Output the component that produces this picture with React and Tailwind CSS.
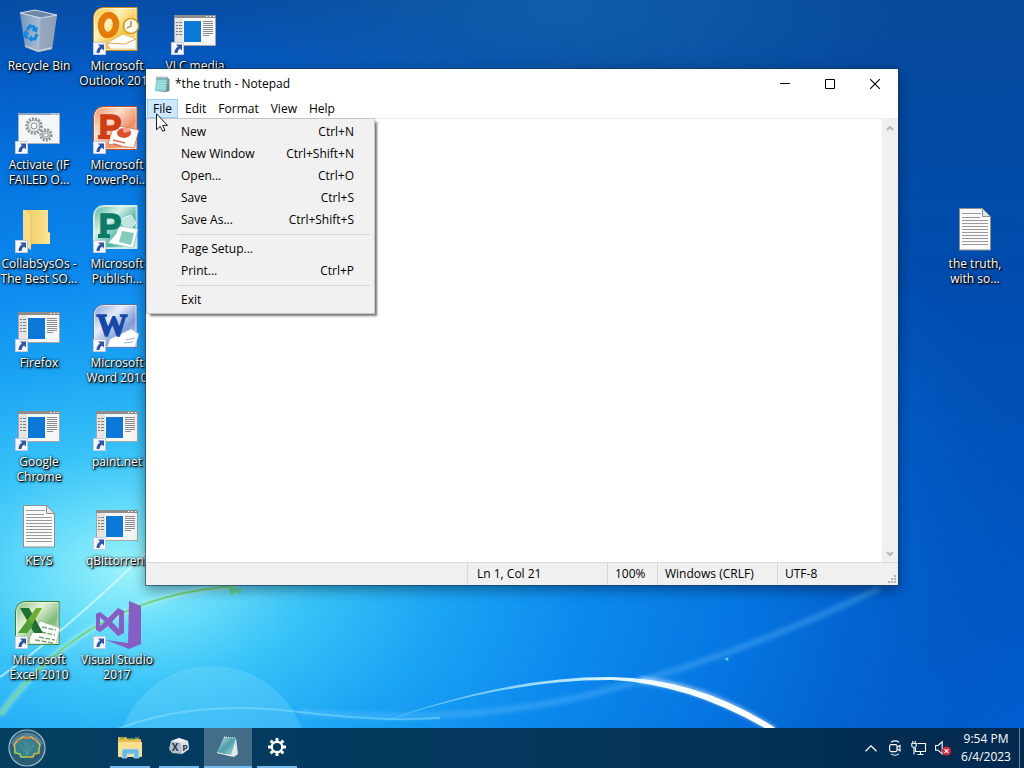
import { useState } from 'react'

const MENUS = ['Edit', 'Format', 'View', 'Help']

const FILE_MENU = [
  [
    { label: 'New', keys: 'Ctrl+N' },
    { label: 'New Window', keys: 'Ctrl+Shift+N' },
    { label: 'Open...', keys: 'Ctrl+O' },
    { label: 'Save', keys: 'Ctrl+S' },
    { label: 'Save As...', keys: 'Ctrl+Shift+S' },
  ],
  [
    { label: 'Page Setup...' },
    { label: 'Print...', keys: 'Ctrl+P' },
  ],
  [{ label: 'Exit' }],
]

const SHORTCUTS = [
  { lines: ['Recycle Bin'], Icon: RecycleBin },
  { lines: ['Activate (IF', 'FAILED O...'], Icon: GearsWindow, shortcut: true },
  { lines: ['CollabSysOs -', 'The Best SO...'], Icon: Folder, shortcut: true },
  { lines: ['Firefox'], Icon: AppWindow, shortcut: true },
  { lines: ['Google', 'Chrome'], Icon: AppWindow, shortcut: true },
  { lines: ['KEYS'], Icon: TextFile },
  { lines: ['Microsoft', 'Excel 2010'], Icon: Excel, shortcut: true },
  { lines: ['Microsoft', 'Outlook 2010'], Icon: Outlook, shortcut: true },
  { lines: ['Microsoft', 'PowerPoi...'], Icon: PowerPoint, shortcut: true },
  { lines: ['Microsoft', 'Publish...'], Icon: Publisher, shortcut: true },
  { lines: ['Microsoft', 'Word 2010'], Icon: Word, shortcut: true },
  { lines: ['paint.net'], Icon: AppWindow, shortcut: true },
  { lines: ['qBittorrent'], Icon: AppWindow, shortcut: true },
  { lines: ['Visual Studio', '2017'], Icon: VisualStudio, shortcut: true },
  { lines: ['VLC media'], Icon: AppWindow, shortcut: true },
]

const TASKS = [
  { name: 'File Explorer', Icon: ExplorerIcon },
  { name: 'XP', Icon: XpIcon },
  { name: 'Notepad', Icon: NotepadTaskIcon, active: true },
  { name: 'Settings', Icon: SettingsIcon },
]

export default function App() {
  return (
    <div className="relative flex h-screen flex-col overflow-hidden bg-[#0a6fd6] font-['Open_Sans','Noto_Sans',sans-serif] text-xs text-black select-none">
      <Wallpaper />
      <main className="relative min-h-0 flex-1">
        <div className="grid grid-flow-col auto-cols-[78px] grid-rows-[repeat(7,99px)]">
          {SHORTCUTS.map((s) => (
            <DesktopIcon key={s.lines.join(' ')} {...s} />
          ))}
        </div>
        <div className="absolute top-[198px] right-[10px] w-[78px]">
          <DesktopIcon lines={['the truth,', 'with so...']} Icon={TextFile} />
        </div>
        <Notepad />
      </main>
      <Taskbar />
    </div>
  )
}

function DesktopIcon({ lines, Icon, shortcut }) {
  return (
    <button className="flex h-[99px] flex-col items-center gap-[3px] pt-[7px] text-white">
      <svg viewBox="0 0 48 48" className="h-12 w-12 shrink-0" aria-hidden="true">
        <Icon />
        {shortcut && <ShortcutArrow />}
      </svg>
      <span className="flex w-[78px] flex-col items-center leading-[15px] whitespace-nowrap [text-shadow:1px_1px_1px_#000,1px_1px_3px_#000,0_0_3px_#000a]">
        {lines.map((l) => <span key={l}>{l}</span>)}
      </span>
    </button>
  )
}

function Notepad() {
  const [open, setOpen] = useState(true)
  const [text, setText] = useState('')

  return (
    <section
      aria-label="Notepad"
      className="absolute top-[69px] right-[126px] bottom-[143px] left-[146px] flex flex-col bg-white shadow-[0_0_0_1px_#1b3a5c99,0_4px_12px_1px_#0006]"
    >
      <header className="flex h-[30px] shrink-0 items-center">
        <svg viewBox="0 0 16 16" className="ml-2 h-4 w-4" aria-hidden="true">
          <path d="M13 2l2.500 1v12L12 16l-11-1z" fill="#6f8f92" />
          <path d="M2.500 2h11l-1.500 13H.8z" fill="#86cfcf" />
          <path d="M3.500 5h9M3 7.500h9M2.800 10h9M2.500 12h9" stroke="#c4efed" strokeWidth=".7" />
          <path d="M3 .5v3M5 .5v3M7 .5v3M9 .5v3M11 .5v3M13 .5v3" stroke="#5b6c70" strokeWidth=".8" />
        </svg>
        <h1 className="ml-[5px] flex-1">*the truth - Notepad</h1>
        <button aria-label="Minimize" className="flex h-full w-[46px] items-center justify-center">
          <svg viewBox="0 0 10 10" className="h-[10px] w-[10px]"><path d="M0 4.500h10" stroke="#000" /></svg>
        </button>
        <button aria-label="Maximize" className="flex h-full w-11 items-center justify-center">
          <svg viewBox="0 0 10 10" className="h-[10px] w-[10px]"><path d="M.5.5h9v9h-9z" stroke="#000" fill="none" /></svg>
        </button>
        <button aria-label="Close" className="flex h-full w-[46px] items-center justify-center">
          <svg viewBox="0 0 10 10" className="h-[10px] w-[10px]"><path d="M0 0l10 10M10 0L0 10" stroke="#000" strokeWidth="1.100" /></svg>
        </button>
      </header>

      <nav className="flex h-5 shrink-0 items-stretch border-b border-[#ececec]">
        <div className="relative mr-px">
          <button
            onClick={() => setOpen(!open)}
            aria-expanded={open}
            className="ml-px h-[19px] w-[31px] border border-[#99d1ff] bg-[#cce8ff]"
          >
            File
          </button>
          {open && <FileMenu />}
          <Cursor />
        </div>
        {MENUS.map((m) => (
          <button key={m} className="px-[6px]">{m}</button>
        ))}
      </nav>

      <div className="flex min-h-0 flex-1">
        <textarea
          aria-label="Text"
          value={text}
          onChange={(e) => setText(e.target.value)}
          className="min-w-0 flex-1 resize-none p-1 outline-none"
        />
        <div className="flex w-4 flex-col justify-between bg-[#f0f0f0]">
          <button aria-label="Scroll up" className="flex h-[17px] items-center justify-center">
            <svg viewBox="0 0 8 6" className="h-[6px] w-2"><path d="M1 5l3-3 3 3" stroke="#b8b8b8" strokeWidth="2" fill="none" /></svg>
          </button>
          <button aria-label="Scroll down" className="flex h-[17px] items-center justify-center">
            <svg viewBox="0 0 8 6" className="h-[6px] w-2"><path d="M1 1l3 3 3-3" stroke="#b8b8b8" strokeWidth="2" fill="none" /></svg>
          </button>
        </div>
      </div>

      <footer className="relative flex h-[23px] shrink-0 items-center justify-end border-t border-[#dadada] bg-[#f0f0f0]">
        <span className="flex h-full w-[140px] items-center border-l border-[#d7d7d7] pl-[9px]">Ln 1, Col 21</span>
        <span className="flex h-full w-[50px] items-center border-l border-[#d7d7d7] pl-[7px]">100%</span>
        <span className="flex h-full w-[120px] items-center border-l border-[#d7d7d7] pl-[7px]">Windows (CRLF)</span>
        <span className="flex h-full w-[121px] items-center border-l border-[#d7d7d7] pl-[7px]">UTF-8</span>
        <svg viewBox="0 0 8 8" className="absolute right-[2px] bottom-[2px] h-2 w-2" fill="#b4b4b4" aria-hidden="true">
          <path d="M6 0h2v2H6zM3 3h2v2H3zM6 3h2v2H6zM0 6h2v2H0zM3 6h2v2H3zM6 6h2v2H6z" />
        </svg>
      </footer>
    </section>
  )
}

function FileMenu() {
  return (
    <div
      role="menu"
      className="absolute top-[19px] left-0 z-10 w-[229px] border border-[#c4c4c4] bg-[#f1f1f1] py-[2px] shadow-[3px_3px_2px_-1px_#0008]"
    >
      {FILE_MENU.map((group, i) => (
        <div key={i}>
          {i > 0 && <div className="mr-1 ml-[30px] h-[7px] py-[3px]"><div className="h-px bg-[#d4d4d4]" /></div>}
          {group.map((item) => (
            <button key={item.label} role="menuitem" className="flex h-[22px] w-full items-center justify-between pr-5 pl-[34px]">
              <span>{item.label}</span>
              {item.keys && <span>{item.keys}</span>}
            </button>
          ))}
        </div>
      ))}
    </div>
  )
}

function Cursor() {
  return (
    <svg viewBox="0 0 12 19" className="pointer-events-none absolute top-[14px] left-[10px] z-20 h-[19px] w-3" aria-hidden="true">
      <path d="M.5.8v16l3.700-3.500 2.500 5 2.300-1-2.400-4.900h4.900z" fill="#fff" stroke="#000" strokeWidth=".9" />
    </svg>
  )
}

function Taskbar() {
  return (
    <footer className="relative flex h-10 shrink-0 items-stretch bg-linear-to-r from-[#043f62] via-[#04375d] to-[#03294f] pl-[3px] text-white">
      <button aria-label="Start" className="mr-[55px] flex w-12 items-center justify-center">
        <svg viewBox="0 0 38 38" className="h-[38px] w-[38px]">
          <circle cx="19" cy="19" r="18" fill="#2b5d76" stroke="#9dbfcc" strokeWidth="1.200" />
          <path d="M3 15a17 17 0 0 1 32 0q-16 7-32 0z" fill="#6f9caf" opacity=".6" />
          <path d="M13 28l-1-3-5-1v-4l-1-4 4-5 5-3 4 1 4-1 5 3 4 5-1 4v4l-5 1-1 3z" fill="#3a7f8c" stroke="#d3b64c" strokeWidth="1.600" strokeLinejoin="round" />
          <path d="M9 13l3-3M16 9h6M26 10l3 3" stroke="#e0704d" strokeWidth="1.400" />
          <path d="M7 20v4l5 1 1 3h5" stroke="#7ec860" strokeWidth="1.300" fill="none" />
          <path d="M19 26l-7-11M19 26l-3-14M19 26V11M19 26l3-14M19 26l7-11" stroke="#55a3aa" strokeWidth=".6" />
        </svg>
      </button>
      <div className="flex flex-1 gap-px">
        {TASKS.map(({ name, Icon, active }) => (
          <button
            key={name}
            aria-label={name}
            className={active
              ? 'flex w-12 items-center justify-center border-b-2 border-[#76b9ed] bg-white/25'
              : 'mx-1 flex w-10 items-center justify-center border-b-2 border-[#76b9ed]'}
          >
            <Icon />
          </button>
        ))}
      </div>
      <div className="flex items-center gap-2">
        <button aria-label="Show hidden icons" className="flex w-4 justify-center">
          <svg viewBox="0 0 12 7" className="h-[7px] w-3"><path d="M.5 6.200L6 .8l5.500 5.400" stroke="#fff" strokeWidth="1.200" fill="none" /></svg>
        </button>
        <button aria-label="Meet Now" className="w-4">
          <svg viewBox="0 0 16 16" className="h-4 w-4" fill="none" stroke="#fff" strokeWidth="1.100">
            <rect x="2.600" y="4.600" width="7.400" height="7" rx="1.500" />
            <path d="M10 7.200l3-1.700v5.200L10 9M4 2.200q4-2.600 8 0M4 13.900q4 2.600 8 0" />
          </svg>
        </button>
        <button aria-label="Network" className="w-4">
          <svg viewBox="0 0 16 16" className="h-4 w-4" fill="none" stroke="#fff" strokeWidth="1.100">
            <path d="M6.500 3.500h8v8h-10V8M9.500 11.500v2.500M6.500 14.500h6" />
            <path d="M.8 3.500h4.400v2.200q0 1.500-1.500 1.500H2.300Q.8 7.200.8 5.700zM1.800 1v2.500M4.200 1v2.500M3 7v7.500" />
          </svg>
        </button>
        <button aria-label="Volume muted" className="w-4">
          <svg viewBox="0 0 16 16" className="h-4 w-4">
            <path d="M.6 5.500h2.600l4-3.700v12l-4-3.500H.6z" fill="none" stroke="#fff" strokeWidth="1.100" />
            <circle cx="11.500" cy="11" r="4.500" fill="#d1283c" />
            <path d="M9.600 9.100l3.800 3.800M13.400 9.100l-3.800 3.800" stroke="#fff" strokeWidth="1.200" />
          </svg>
        </button>
      </div>
      <button className="ml-2 flex w-[54px] flex-col items-center justify-center leading-[18px] whitespace-nowrap">
        <span>9:54 PM</span>
        <span>6/4/2023</span>
      </button>
      <button aria-label="Show desktop" className="ml-[6px] w-[5px] border-l border-white/40" />
    </footer>
  )
}

/* desktop icons, all drawn on a 48x48 box */

function ShortcutArrow() {
  return (
    <g>
      <path d="M.5 35.500h12v12H.5z" fill="#f6f8fb" stroke="#c3ccd8" />
      <path d="M5 37.500h6v6l-2-2q-2.500 1.500-2.500 4.500H3.500q0-4.500 3.500-6.500z" fill="#2f55a4" />
    </g>
  )
}

function AppWindow() {
  return (
    <g>
      <path d="M3.500 8.500h41v30h-41z" fill="#f6f6f6" stroke="#a5a5a5" />
      <path d="M3 8h42v3H3z" fill="#8d8d8d" />
      <path d="M35 9.500h1.500M38.500 9.500h1.500M42 9.500h1.500" stroke="#fff" />
      <path d="M4 11h8v27H4z" fill="#e4e4e4" />
      <path d="M13 14h17v21H13z" fill="#0b78d7" />
      <path d="M5 15.500h2m1 0h3M5 18.500h2m1 0h3M5 21.500h2m1 0h3M5 24.500h2m1 0h3M5 27.500h2m1 0h3" stroke="#7d7d7d" />
      <path d="M32 14.500h10M32 16.500h10M32 18.500h10M32 20.500h10M32 22.500h10M32 24.500h10M32 26.500h10M32 28.500h6" stroke="#8c8c8c" />
    </g>
  )
}

function Gear({ cx, cy, r }) {
  return (
    <g fill="none" stroke="#8c9196">
      <circle cx={cx} cy={cy} r={r} strokeWidth="2.400" strokeDasharray="2 1.300" />
      <circle cx={cx} cy={cy} r={r - 1.500} strokeWidth="1" fill="#e9ebec" />
      <circle cx={cx} cy={cy} r={r / 2.500} strokeWidth="1" fill="#fff" />
    </g>
  )
}

function GearsWindow() {
  return (
    <g>
      <path d="M3.500 7.500h41v30h-41z" fill="#f4f6f8" stroke="#a9b0b8" />
      <path d="M3 7h42v2H3z" fill="#8fa3bb" />
      <path d="M36 8h1.500M39 8h1.500M42 8h1.500" stroke="#fff" />
      <Gear cx={19} cy={20} r={7.500} />
      <Gear cx={31} cy={29} r={5.500} />
    </g>
  )
}

function TextFile() {
  return (
    <g>
      <path d="M8.500 3.500h23l8 8v33.500h-31z" fill="#fafafa" stroke="#8f8f8f" />
      <path d="M31.500 3.500v8h8z" fill="#dfe5ea" stroke="#8f8f8f" />
      <path d="M11 8.500h19M11 12.500h18M11 15.500h26M11 18.500h26M11 21.500h26M11 24.500h26M11 27.500h26M11 30.500h26M11 33.500h26M11 36.500h26M11 39.500h26" stroke="#9a9a9a" />
    </g>
  )
}

function Folder() {
  return (
    <g>
      <defs>
        <linearGradient id="fold" x1="0" x2="1"><stop offset="0" stopColor="#f2cf69" /><stop offset="1" stopColor="#fbe594" /></linearGradient>
      </defs>
      <path d="M8 5h25v22l2 1v11H14L8 35z" fill="#f2cf69" />
      <path d="M14 5h19v22l2 1v11H14z" fill="url(#fold)" />
      <path d="M8 5q6 1 8 6v34l-6-4-2-5z" fill="#f8dd85" />
      <path d="M16 10v30" stroke="#e6c25a" strokeWidth=".8" />
    </g>
  )
}

function RecycleBin() {
  return (
    <g>
      <defs>
        <linearGradient id="bin" x1="0" x2="1"><stop offset="0" stopColor="#7f9bbd" /><stop offset=".5" stopColor="#b4c3d6" /><stop offset="1" stopColor="#8497b2" /></linearGradient>
      </defs>
      <path d="M5 6l15-3 22 5-5 34-14 3-13-5z" fill="url(#bin)" opacity=".92" />
      <path d="M26 10l16-2-5 34-13 3z" fill="#94a3ba" opacity=".8" />
      <path d="M5 6l15-3 22 5-16 3z" fill="#6d86a6" stroke="#d3dde9" strokeWidth="1" />
      <path d="M10 38l13 5 14-3v2l-14 3-13-5z" fill="#d8d9d6" opacity=".7" />
      <g fill="none" stroke="#1689dc" strokeWidth="3.200">
        <path d="M12 23l3-4 4 1 1 3" />
        <path d="M22 27l-2 5-4 0" />
        <path d="M13 31l-3-2 1-3" />
      </g>
      <path d="M16 23l6 3 1-6zM17 28l-4 4 4 3zM7 27l4-4 4 5z" fill="#1689dc" />
    </g>
  )
}

function OfficeTile({ id, light, mid, edge, children }) {
  return (
    <g>
      <defs>
        <linearGradient id={id} x1="0" y1="0" x2="1" y2="1"><stop offset="0" stopColor={mid} /><stop offset=".35" stopColor={light} /><stop offset=".65" stopColor={mid} /><stop offset="1" stopColor={light} /></linearGradient>
      </defs>
      <path d="M11 .5h33v43H.5V11Q1 1 11 .5z" fill={`url(#${id})`} stroke={edge} />
      <path d="M11 1.500h32v41h-41.500V11Q2 2 11 1.500z" fill="none" stroke="#fff" strokeOpacity=".6" />
      {children}
    </g>
  )
}

function OfficeLetter({ fill, children }) {
  return (
    <text x="17" y="32" fill={fill} stroke={fill} strokeWidth="1.500" fontFamily="Liberation Sans, sans-serif" fontWeight="700" fontSize="34" textAnchor="middle">{children}</text>
  )
}

function Outlook() {
  return (
    <OfficeTile id="outlook" light="#fff3b8" mid="#f3c33d" edge="#c98f1d">
      <path d="M14 36l16-9 13 5v10H17z" fill="#fff" stroke="#dca54a" strokeWidth=".6" />
      <path d="M14 36l18 1 11-5" fill="none" stroke="#dca54a" />
      <ellipse cx="15.500" cy="18" rx="7.500" ry="10" transform="rotate(8 15 18)" fill="none" stroke="#e47a0c" strokeWidth="6.500" />
      <circle cx="38" cy="19" r="7.500" fill="#fffbe8" stroke="#cf9a28" strokeWidth="1.600" />
      <path d="M38 14v5l-4 2" stroke="#94702b" strokeWidth="1.200" fill="none" />
    </OfficeTile>
  )
}

function PowerPoint() {
  return (
    <OfficeTile id="ppt" light="#fde0cd" mid="#ef9064" edge="#ba4a22">
      <path d="M21 19l25 5-5 18-26-4z" fill="#fff" stroke="#c9684a" strokeWidth=".7" />
      <ellipse cx="31" cy="27" rx="7" ry="5" fill="#dc5030" />
      <path d="M31 27l-2-5q7-1 9 3z" fill="#f3a386" />
      <path d="M20 34l12 3M20 38l8 2" stroke="#db6e54" strokeWidth="1.500" />
      <OfficeLetter fill="#cf3d14">P</OfficeLetter>
      <path d="M5 29h12v4H5z" fill="#cf3d14" />
    </OfficeTile>
  )
}

function Publisher() {
  return (
    <OfficeTile id="pub" light="#d6f1e9" mid="#48b39c" edge="#d5efe8">
      <path d="M26 15l12-5 5 8-8 8z" fill="#c1e5dc" stroke="#fff" strokeWidth=".8" />
      <path d="M26 21l19 3-5 19-25-5 8-9z" fill="#fff" stroke="#8fbfb4" strokeWidth=".6" />
      <path d="M29 26l12 2-3 12-12-3z" fill="#86ccbc" />
      <OfficeLetter fill="#0c7a66">P</OfficeLetter>
      <path d="M5 29h12v4H5z" fill="#0c7a66" />
    </OfficeTile>
  )
}

function Word() {
  return (
    <OfficeTile id="word" light="#e4edf9" mid="#7f9cd6" edge="#5672ad">
      <path d="M17 35l21-10 8 5-4 13H14z" fill="#fff" stroke="#9cb0d6" strokeWidth=".6" />
      <path d="M33 36l9-2M31 39l9-1" stroke="#a2b3d5" strokeWidth="1" />
      <text x="19" y="32" fill="#1648a8" stroke="#1648a8" strokeWidth="1.400" fontFamily="Liberation Serif, serif" fontWeight="700" fontSize="31" textAnchor="middle">W</text>
    </OfficeTile>
  )
}

function Excel() {
  return (
    <OfficeTile id="excel" light="#e3f3d6" mid="#80b978" edge="#387b35">
      <path d="M15 36l10-16 20 7-4 16H14z" fill="#fff" stroke="#8ab283" strokeWidth=".6" />
      <path d="M27 26l14 3M26 31l14 3M24 36l16 3M20 39l18 3" stroke="#79a870" strokeWidth="1.500" strokeDasharray="5 1.500" />
      <path d="M5 7h9l14 25h-9z" fill="#1e7030" />
      <path d="M21 7h6L12 32H3z" fill="#6fae35" />
      <path d="M14 18l4 7-6 7H3z" fill="#4f9d36" />
    </OfficeTile>
  )
}

function VisualStudio() {
  return (
    <g fill="#865fc5">
      <path d="M36 0l12 5v38l-12 5-23-9 22 3z" />
      <path fillRule="evenodd" d="M3 13l4-2 8 6 10-10 6 3v22l-6 3-10-10-8 6-4-2zM7 16v9l5-4zM26 13l-7 8 7 7z" />
    </g>
  )
}

/* taskbar icons */

function ExplorerIcon() {
  return (
    <svg viewBox="0 0 24 24" className="h-6 w-6">
      <path d="M0 3q0-1 1-1h7l2 2h12q1 0 1 1v17H0z" fill="#e7bd52" />
      <path d="M2 3h5M10 4h6M17 3h4" stroke="#7ea14c" strokeWidth="1.500" />
      <path d="M0 7h24v14q0 1-1 1H1q-1 0-1-1z" fill="#f8df8d" />
      <path d="M4 23v-7q0-2 2-2h13q2 0 2 2v7h-5v-4H9v4z" fill="#69b8e5" stroke="#b3e2f8" strokeWidth=".8" />
    </svg>
  )
}

function XpIcon() {
  return (
    <svg viewBox="0 0 24 24" className="h-6 w-6">
      <path d="M4 6l8-3 9 3 1 8-7 5-10-1-3-4z" fill="#b4bfcb" />
      <path d="M4 6l8-3 9 3-7 2z" fill="#edf1f4" />
      <path d="M14 8l7-2 1 8-7 5z" fill="#dce2e8" />
      <text x="8" y="16" fontSize="10" fontWeight="700" fill="#26354d" textAnchor="middle">X</text>
      <text x="18" y="16" fontSize="9" fontWeight="700" fill="#26354d" textAnchor="middle">P</text>
    </svg>
  )
}

function NotepadTaskIcon() {
  return (
    <svg viewBox="0 0 24 24" className="h-6 w-6">
      <defs>
        <linearGradient id="note" x1="0" y1="0" x2="1" y2="1"><stop offset="0" stopColor="#c0e7e8" /><stop offset=".5" stopColor="#4f9ea9" /><stop offset="1" stopColor="#a7dedf" /></linearGradient>
      </defs>
      <path d="M20 3l2 16-4 3-9-3z" fill="#dfe9ea" />
      <path d="M8 2l12 1-5 17-14-3z" fill="url(#note)" />
      <path d="M8 2l12 1" stroke="#eefafa" strokeWidth="1" strokeDasharray="1 1" />
      <path d="M1 17.500l14 3.500 4-2" stroke="#f1f8f8" fill="none" />
    </svg>
  )
}

function SettingsIcon() {
  return (
    <svg viewBox="0 0 20 20" className="h-5 w-5">
      <circle cx="10" cy="10" r="5.200" fill="none" stroke="#fff" strokeWidth="2.200" />
      <path d="M10 1v3M10 16v3M1 10h3M16 10h3M3.600 3.600l2.200 2.200M14.200 14.200l2.200 2.200M16.400 3.600l-2.200 2.200M5.800 14.200l-2.200 2.200" stroke="#fff" strokeWidth="3" />
    </svg>
  )
}

function Wallpaper() {
  return (
    <svg viewBox="0 0 1024 768" preserveAspectRatio="none" className="absolute inset-0 h-full w-full" aria-hidden="true">
      <defs>
        <linearGradient id="sky" x1="0" y1="0" x2="0" y2="1">
          <stop offset="0" stopColor="#084a9c" />
          <stop offset=".35" stopColor="#004cae" />
          <stop offset=".7" stopColor="#0054c0" />
          <stop offset="1" stopColor="#0060d4" />
        </linearGradient>
        <radialGradient id="glow" cx="0" cy="0" r="1" gradientUnits="userSpaceOnUse" gradientTransform="translate(130 570) scale(920 600)">
          <stop offset="0" stopColor="#9cf4fb" />
          <stop offset=".1" stopColor="#66dcfa" />
          <stop offset=".2" stopColor="#38c2f7" />
          <stop offset=".34" stopColor="#1ca4f4" />
          <stop offset=".5" stopColor="#0c89ee" />
          <stop offset=".68" stopColor="#0574e0" />
          <stop offset=".84" stopColor="#0460cc" stopOpacity=".8" />
          <stop offset="1" stopColor="#0454b8" stopOpacity="0" />
        </radialGradient>
        <radialGradient id="sheen" cx="0" cy="0" r="1" gradientUnits="userSpaceOnUse" gradientTransform="translate(560 10) scale(340 120)">
          <stop offset="0" stopColor="#1466b4" stopOpacity=".7" />
          <stop offset="1" stopColor="#1466b4" stopOpacity="0" />
        </radialGradient>
        <linearGradient id="swoosh" x1="0" x2="1">
          <stop offset="0" stopColor="#8ce4ff" stopOpacity=".3" />
          <stop offset=".6" stopColor="#d9f6ff" />
          <stop offset="1" stopColor="#fff" />
        </linearGradient>
        <filter id="soft"><feGaussianBlur stdDeviation="2" /></filter>
      </defs>
      <rect width="1024" height="768" fill="url(#sky)" />
      <rect width="1024" height="768" fill="url(#glow)" />
      <rect width="1024" height="768" fill="url(#sheen)" />
      <path d="M300 712Q470 726 600 692Q740 656 880 588" stroke="#7accff" strokeOpacity=".3" strokeWidth="6" fill="none" filter="url(#soft)" />
      <circle cx="727" cy="659" r="1.500" fill="#7fc6ff" />
      <circle cx="212" cy="762" r="96" fill="#a5eeff" opacity=".2" />
      <path d="M110 732Q190 698 300 712Q380 722 440 718" stroke="#9ceaff" strokeOpacity=".4" strokeWidth="2" fill="none" />
      <path d="M0 677Q60 636 146 553" stroke="#d8fbff" strokeOpacity=".7" strokeWidth="2" fill="none" />
      <path d="M0 715Q85 596 236 586" stroke="#c4f7ee" strokeOpacity=".6" strokeWidth="5" fill="none" filter="url(#soft)" />
      <path d="M0 715Q85 596 236 586" stroke="#73d582" strokeWidth="2" fill="none" />
      <path d="M228 587l14 2-2 6-4-3-4 5z" fill="#62d060" opacity=".6" />
      <path d="M360 730Q500 676 612 677Q700 678 780 731L770 731Q690 684 612 680Q500 679 360 730z" fill="url(#swoosh)" />
      <path d="M640 680Q705 686 774 730" stroke="#fff" strokeOpacity=".6" strokeWidth="6" fill="none" filter="url(#soft)" />
    </svg>
  )
}
